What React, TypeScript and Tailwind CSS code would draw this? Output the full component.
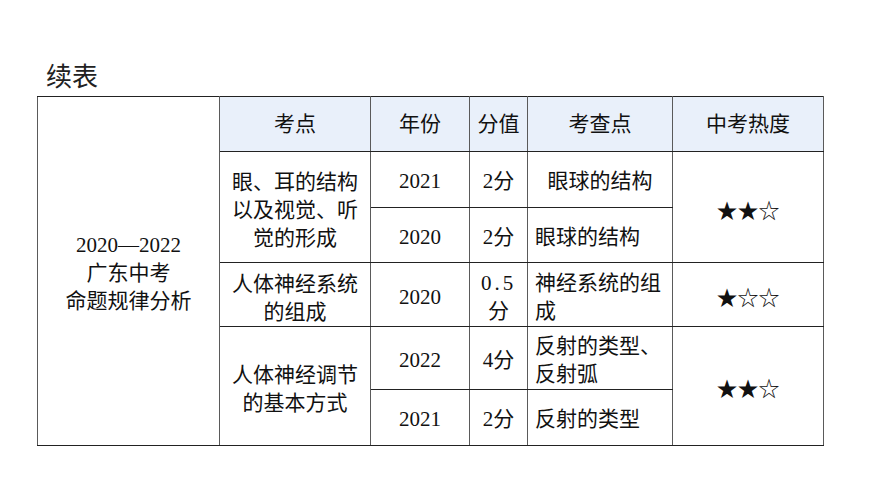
import React from "react";

const font = { fontFamily: '"Liberation Serif", "Noto Sans CJK SC", serif' };

export default function App() {
  const td = "border-x border-x-[#5a5a5a] border-y border-y-[#222] p-0 align-middle";
  return (
    <div className="w-[870px] h-[489px] bg-white text-[#111]" style={font}>
      <div className="pt-[60px] pl-[37px]">
        <div className="h-[36px] leading-[36px] pl-[9px] text-[26px] text-[#222]">续表</div>
        <table className="border-collapse table-fixed w-[787px] text-[21px] leading-[28px]">
          <colgroup>
            <col className="w-[182px]" />
            <col className="w-[151px]" />
            <col className="w-[99px]" />
            <col className="w-[58px]" />
            <col className="w-[145px]" />
            <col className="w-[151px]" />
          </colgroup>
          <tbody>
            <tr className="h-[55px]">
              <td rowSpan={7} className={`${td} text-center pt-[4px]`}>
                2020—2022<br />广东中考<br />命题规律分析
              </td>
              <td className={`${td} bg-[#e9f0fa] text-center`}>考点</td>
              <td className={`${td} bg-[#e9f0fa] text-center`}>年份</td>
              <td className={`${td} bg-[#e9f0fa] text-center`}>分值</td>
              <td className={`${td} bg-[#e9f0fa] text-center`}>考查点</td>
              <td className={`${td} bg-[#e9f0fa] text-center`}>中考热度</td>
            </tr>
            <tr className="h-[56px]">
              <td rowSpan={2} className={`${td} text-center pt-[6px]`}>
                眼、耳的结构<br />以及视觉、听<br />觉的形成
              </td>
              <td className={`${td} text-center pt-[3px]`}>2021</td>
              <td className={`${td} text-center pt-[3px]`}>2分</td>
              <td className={`${td} text-center pt-[3px]`}>眼球的结构</td>
              <td rowSpan={2} className={`${td} text-center pt-[7px]`}>★★☆</td>
            </tr>
            <tr className="h-[55px]">
              <td className={`${td} text-center pt-[3px]`}>2020</td>
              <td className={`${td} text-center pt-[3px]`}>2分</td>
              <td className={`${td} text-left pl-[7px] pt-[3px]`}>眼球的结构</td>
            </tr>
            <tr className="h-[64px]">
              <td className={`${td} text-center pt-[6px]`}>
                人体神经系统<br />的组成
              </td>
              <td className={`${td} text-center pt-[5px]`}>2020</td>
              <td className={`${td} text-center pt-[4px]`}>
                <span className="tracking-[3px]">0.5</span>
                <br />分
              </td>
              <td className={`${td} text-left pl-[7px] pt-[4px]`}>
                神经系统的组<br />成
              </td>
              <td className={`${td} text-center pt-[6px]`}>★☆☆</td>
            </tr>
            <tr className="h-[63px]">
              <td rowSpan={2} className={`${td} text-center pt-[6px]`}>
                人体神经调节<br />的基本方式
              </td>
              <td className={`${td} text-center pt-[3px]`}>2022</td>
              <td className={`${td} text-center pt-[3px]`}>4分</td>
              <td className={`${td} text-left pl-[7px] pt-[3px]`}>
                反射的类型、<br />反射弧
              </td>
              <td rowSpan={2} className={`${td} text-center pt-[6px]`}>★★☆</td>
            </tr>
            <tr className="h-[56px]">
              <td className={`${td} text-center pt-[3px]`}>2021</td>
              <td className={`${td} text-center pt-[3px]`}>2分</td>
              <td className={`${td} text-left pl-[7px] pt-[3px]`}>反射的类型</td>
            </tr>
          </tbody>
        </table>
      </div>
    </div>
  );
}
